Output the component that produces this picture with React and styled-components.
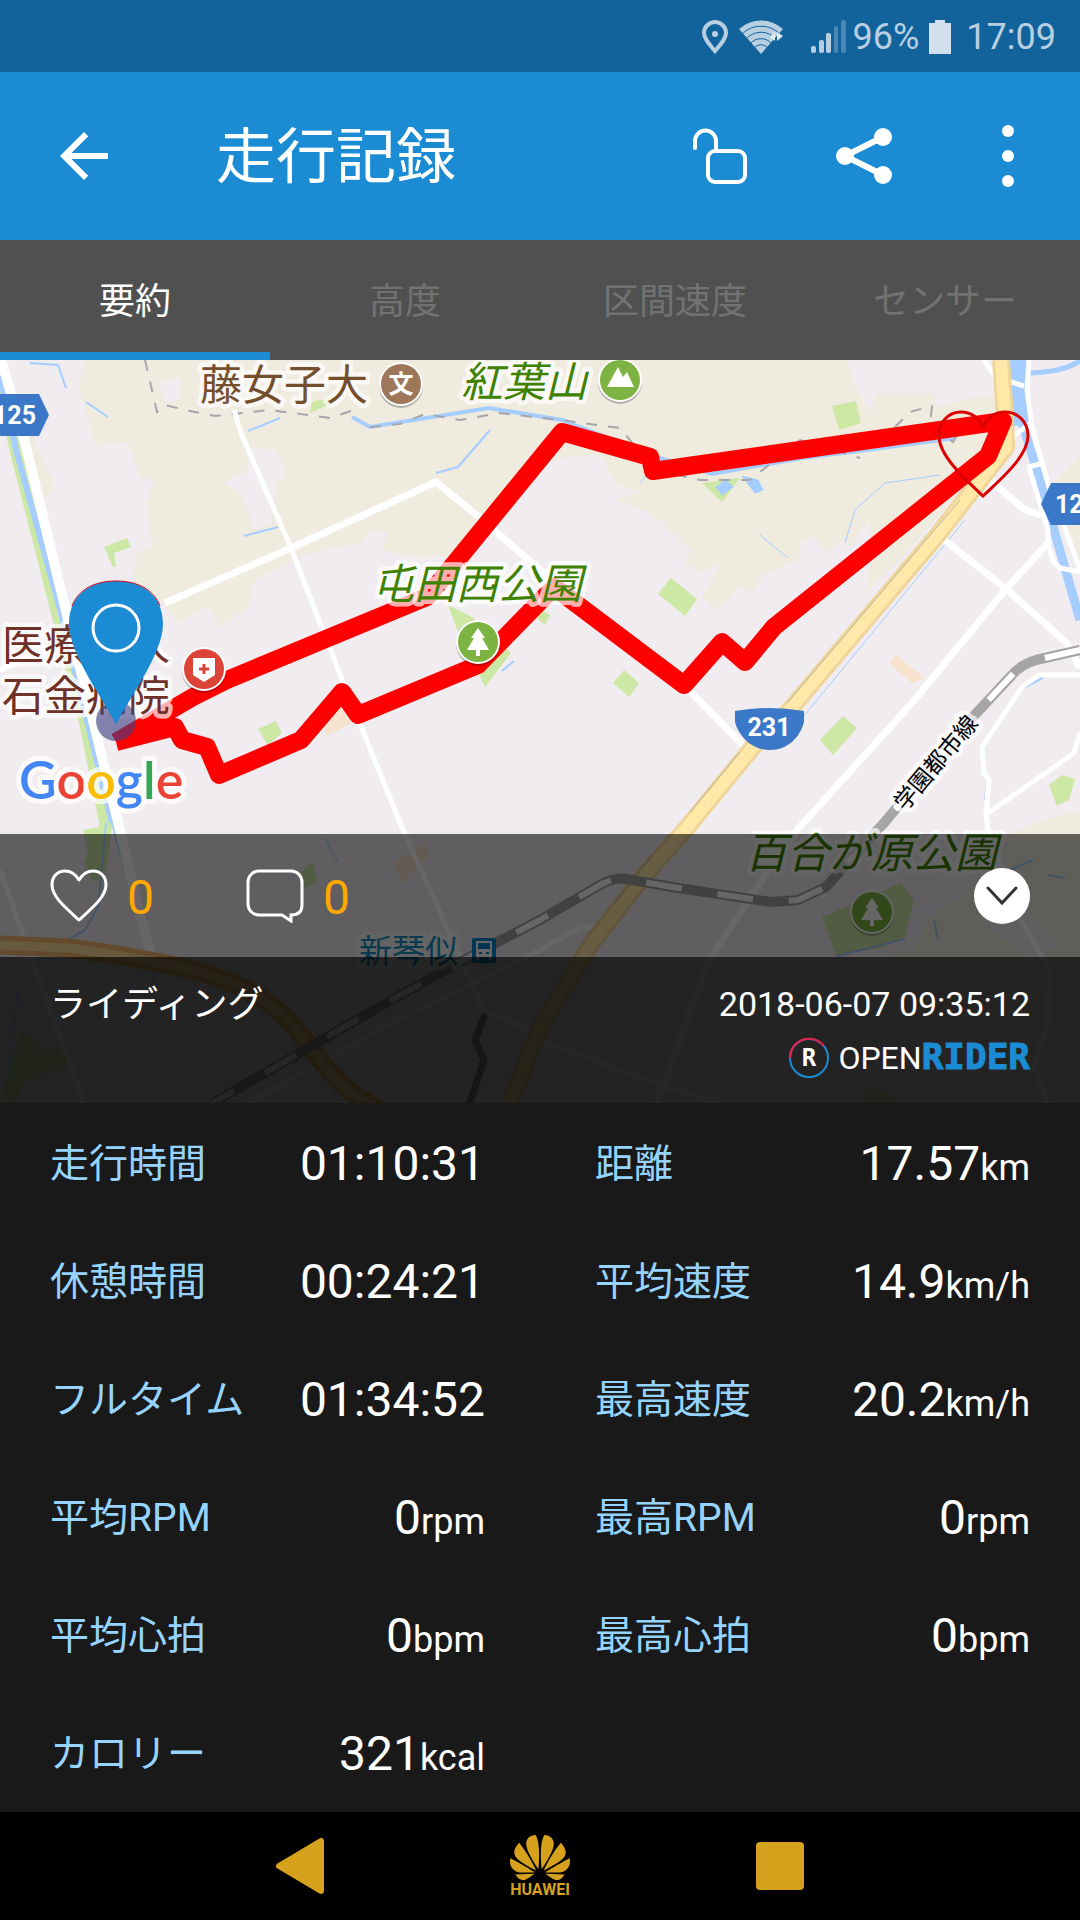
import styled, {createGlobalStyle} from "styled-components";
import {SiHuawei} from "react-icons/si";

const stats = [
    {label: "走行時間", value: "01:10:31"},
    {label: "距離", value: "17.57", unit: "km"},
    {label: "休憩時間", value: "00:24:21"},
    {label: "平均速度", value: "14.9", unit: "km/h"},
    {label: "フルタイム", value: "01:34:52"},
    {label: "最高速度", value: "20.2", unit: "km/h"},
    {label: "平均RPM", value: "0", unit: "rpm"},
    {label: "最高RPM", value: "0", unit: "rpm"},
    {label: "平均心拍", value: "0", unit: "bpm"},
    {label: "最高心拍", value: "0", unit: "bpm"},
    {label: "カロリー", value: "321", unit: "kcal"},
]

const tabs = ["要約", "高度", "区間速度", "センサー"]

export default function App() {
    return <Page>
        <GlobalStyle/>
        <StatusBar/>
        <AppBar/>
        <TabList role="tablist">
            {tabs.map((name, i) => <Tab key={name} role="tab" aria-selected={i === 0} $active={i === 0}>{name}</Tab>)}
        </TabList>
        <MapArea>
            <RideMap/>
            <MapPanels>
                <Reactions/>
                <RideInfo/>
            </MapPanels>
        </MapArea>
        <StatGrid>
            {stats.map(stat => <Stat key={stat.label} {...stat}/>)}
        </StatGrid>
        <NavBar/>
    </Page>
}

const StatusBar = () => {
    return <StatusRow>
        <svg width="28" height="34" viewBox="0 0 28 34" fill="none" stroke="#b8cfe1" strokeWidth="4">
            <path d="M14 31C9 25 3 19 3 13a11 11 0 0 1 22 0c0 6-6 12-11 18z"/>
            <circle cx="14" cy="14" r="3" fill="#b8cfe1" stroke="none"/>
        </svg>
        <WifiIcon/>
        <SignalIcon/>
        <span>96%</span>
        <BatteryIcon width="22" height="34" viewBox="0 0 22 34">
            <path d="M6 0h10v3h6v31H0V3h6z" fill="#d1e0ec"/>
        </BatteryIcon>
        <time>17:09</time>
    </StatusRow>
}

const WifiIcon = () => {
    return <svg width="44" height="34" viewBox="0 0 44 34">
        <path d="M22 34 0 9a33 33 0 0 1 44 0z" fill="#b8cfe1"/>
        <g fill="none" stroke="#12629c" strokeWidth="1">
            <path d="M3 14a27 27 0 0 1 38 0"/>
            <path d="M7 19a20 20 0 0 1 30 0"/>
            <path d="M11 24a14 14 0 0 1 22 0"/>
            <path d="M15 28a9 9 0 0 1 14 0"/>
        </g>
        <path d="m31 17 5-5v9zM38 12v9l6-5z" fill="#e3ecf4"/>
    </svg>
}

const SignalIcon = () => {
    return <Signal width="36" height="34" viewBox="0 0 36 34" fill="#b8cfe1">
        <rect x="0" y="26" width="5" height="7" rx="2"/>
        <rect x="8" y="20" width="5" height="13" rx="2"/>
        <rect x="15" y="13" width="5" height="20" rx="2"/>
        <rect x="23" y="6" width="4" height="27" rx="2" opacity=".35"/>
        <rect x="30" y="0" width="5" height="33" rx="2" opacity=".35"/>
    </Signal>
}

const AppBar = () => {
    return <Header>
        <BackButton aria-label="戻る">
            <svg width="72" height="72" viewBox="0 0 24 24" fill="#fff">
                <path d="M20 11H7.83l5.59-5.59L12 4l-8 8 8 8 1.41-1.41L7.83 13H20v-2z"/>
            </svg>
        </BackButton>
        <Title>走行記録</Title>
        <ActionButton aria-label="ロック">
            <svg width="56" height="56" viewBox="0 0 56 56" fill="none" stroke="#fff" strokeWidth="4">
                <path d="M3 20V13a10 10 0 0 1 21 0v10" strokeLinecap="round"/>
                <rect x="16" y="23" width="37" height="31" rx="7"/>
            </svg>
        </ActionButton>
        <ActionButton aria-label="共有">
            <svg width="56" height="56" viewBox="0 0 56 56" fill="#fff" stroke="#fff">
                <path d="M47 9 9 28l38 19" fill="none" strokeWidth="6"/>
                <g stroke="none">
                    <circle cx="9" cy="28" r="9"/>
                    <circle cx="47" cy="9" r="9"/>
                    <circle cx="47" cy="47" r="9"/>
                </g>
            </svg>
        </ActionButton>
        <ActionButton aria-label="メニュー">
            <svg width="12" height="62" viewBox="0 0 12 62" fill="#fff">
                <circle cx="6" cy="6" r="6"/>
                <circle cx="6" cy="31" r="6"/>
                <circle cx="6" cy="56" r="6"/>
            </svg>
        </ActionButton>
    </Header>
}

const MapBadge = ({x, y, color, children}) => {
    return <g transform={`translate(${x} ${y})`}>
        <circle cy="2" r="22" fill="#000" opacity=".25"/>
        <circle r="22" fill="#fff"/>
        <circle r="20" fill={color}/>
        {children}
    </g>
}

const Tree = () => <path d="M0-14 7-4H4l7 12H2v6h-4V8h-9l7-12h-3z" fill="#fff"/>

const RideMap = () => {
    return <MapSvg viewBox="0 360 1080 743" preserveAspectRatio="xMidYMid slice" role="img" aria-label="走行ルートの地図">
        <rect y="360" width="1080" height="743" fill="#f0ecef"/>
        <Terrain/>
        <Roads/>
        <Route d="M116 742 193 697 227 680 427 597 562 432 650 457 653 471 1003 421 988 456 774 627 745 662 722 642 684 685 554 587 478 665 358 715 342 692 301 740 219 775 207 747 182 740 175 727 116 742"/>
        <MapLabels/>
        <circle cx="116" cy="721" r="20" fill="#3f3f82" opacity=".62"/>
        <path d="M116 725C106 702 69 655 69 624c0-28 20-43 47-43s47 15 47 43c0 31-37 78-47 101z" fill="#1b8bd3"/>
        <path d="M72 606c6-16 22-25 44-25s38 9 44 25" fill="none" stroke="#d0021b"/>
        <circle cx="116" cy="628" r="23" fill="none" stroke="#fff" strokeWidth="3"/>
        <path d="M983 496C965 479 939 456 939 436c0-16 11-24 22-24s18 7 22 15c4-8 11-15 22-15s23 8 23 24c0 20-27 43-45 60z"
              fill="none" stroke="#dc0000" strokeWidth="3"/>
    </MapSvg>
}

const Terrain = () => {
    return <>
        <g fill="#efebdf">
            <path d="M83 360 79 390 96 447 127 442 141 477 155 482 145 503 153 547 136 553 133 590 158 597 179 623 207 607 220 627 248 607 255 580 310 553 362 543 372 530 387 533 382 550 413 557 448 557 482 517 540 463 568 457 600 455 615 483 640 493 616 500 650 513 691 550 685 563 700 572 722 563 702 597 716 610 740 587 753 593 760 577 798 560 802 540 815 537 826 553 843 540 850 547 870 520 868 590 900 560 967 483 1001 427 1001 397 974 397 936 407 936 393 877 393 870 413 853 380 846 360z"/>
            <path d="M30 430 55 488 43 498 28 460z"/>
            <path d="M1050 485 1080 455V560z"/>
            <path d="M1080 810 1043 820 1001 837 1005 867 929 917 912 953 850 957 826 987 884 1007 1000 1103H1080z"/>
        </g>
        <g fill="#f0ecef">
            <path d="M248 447 275 450 286 477 275 483 272 523 255 530 241 493 224 483 248 470z"/>
            <path d="M158 382 180 378 178 400 166 402z"/>
            <path d="M980 920 1010 890 1060 945 1030 960z"/>
        </g>
        <g fill="#cde7a5">
            <path d="M104 547 127 538 131 547 114 553 116 567 113 567zM258 729 276 721 282 733 268 745zM312 402 345 394 334 402 310 413zM448 605 472 617 511 653 485 687 477 670 458 632zM530 603 550 615 545 625 530 612z"/>
            <path d="M832 406 856 401 861 423 839 430zM671 578 697 599 685 616 658 594zM624 670 639 683 629 697 613 683zM843 716 857 728 833 755 820 740zM1049 785 1062 775 1075 779 1069 800 1057 806zM702 483 740 478 722 502z"/>
            <path d="M822 917 901 883 914 900 905 937 881 948 836 955zM83 830 100 827 98 863 93 883 84 863 88 853zM301 873 312 862 318 882 301 890zM21 1030 45 1050 62 1047 67 1063 24 1083 14 1103H0zM861 1103 865 1087 893 1095 900 1103z"/>
        </g>
        <path d="M889 663 896 655 924 678 912 683zM324 728 341 708 351 723 327 736zM394 863 424 843 429 857 401 883z" fill="#f7e2cd"/>
        <g fill="none" stroke="#a5cdff">
            <path d="M0 375 16 450 85 720 106 823 98 880" stroke="#cde7a5" strokeWidth="13"/>
            <path d="M0 375 16 450 61 613 91 737 112 823" strokeWidth="6"/>
            <path d="M106 823 98 907 85 930 62 943M112 823 125 870M137 905 155 985M0 365 7 375M30 363 58 365 66 388M86 402 108 417M248 431 280 418M244 536 278 527M436 473 458 467 490 430M502 671 514 661" strokeWidth="2"/>
            <path d="M352 417 370 427 489 408 562 420 660 458 712 474 802 458 867 450 955 438" strokeWidth="4"/>
            <path d="M640 483 660 460M845 543 855 510 885 483 940 475M760 535 788 558M965 520 780 745M325 838 338 862M17 990 15 1025 8 1075" strokeWidth="1"/>
            <path d="M1018 360 1019 400 1022 425" strokeWidth="17"/>
            <path d="M1021 420 1036 467 1056 537 1080 620" strokeWidth="9"/>
            <path d="M1030 373C1050 372 1065 370 1080 361" strokeWidth="5"/>
            <path d="M837 956 905 939M1010 870 1033 860M1048 875 1065 878M988 775 985 800M1020 690 1044 677M934 920 938 940" strokeWidth="2"/>
            <path d="M716 487 726 480 733 487 722 495zM742 476 758 480 763 490 755 493z" fill="#a5cdff"/>
        </g>
        <path d="M145 360 157 412 165 405 185 410 215 416 270 410 330 418 360 408M370 427 400 424 425 414 460 420 500 413 560 420 620 428 655 470 700 480 750 480 800 440 860 458M895 427 910 412 932 406 930 425 953 442 960 430"
              fill="none" stroke="#a6a6ab" strokeWidth="2" strokeDasharray="11 11"/>
    </>
}

const Roads = () => {
    return <g fill="none" strokeLinejoin="round">
        <g stroke="#fff">
            <path d="M0 355 26 447 64 603 120 830 138 907 151 953" strokeWidth="10"/>
            <path d="M234 410 241 433 291 548 341 677 403 830 454 943 485 1013 510 1020 533 1034" strokeWidth="5"/>
            <path d="M165 603 291 548 436 482 479 517 540 570 684 685 745 747" strokeWidth="7"/>
            <path d="M0 670 60 645M430 487 434 480" strokeWidth="6"/>
            <path d="M938 535 1005 588 1067 643 1080 668M986 477 1025 510 1041 515" strokeWidth="7"/>
            <path d="M1048 543 1005 590 912 703 797 830 760 883 709 960 657 1103" strokeWidth="7"/>
            <path d="M984 360 995 377 1024 386M1029 360 1027 390 1032 427 1050 490 1063 523 1080 570M1032 422 1012 437M1043 463 1029 467 1048 530V545L1054 563 1060 568 1080 572" strokeWidth="5"/>
            <path d="M1080 675H1039L1022 687 982 747 984 773 989 780 986 813 988 830 1019 917 1050 970 1048 1020 1034 1067 1048 1103M1080 733 1074 753 1060 763 988 813" strokeWidth="5"/>
            <path d="M0 870 31 957 84 1103M248 1103 379 1030 540 950 581 927H597M540 1040 660 1085 720 1103" strokeWidth="5"/>
        </g>
        <g strokeWidth="18" stroke="#f0d59a">
            <path d="M1001 360 1005 417 1006 447 936 537 788 712 753 747 685 830 643 877 592 943 540 1027 510 1103"/>
            <path d="M1001 360 1005 417 1006 447 936 537 788 712 753 747 685 830 643 877 592 943 540 1027 510 1103" strokeWidth="12" stroke="#ffe8a8"/>
        </g>
        <path d="M960 500 788 702M740 752 690 812M650 858 615 903" stroke="#b5b5a0" strokeWidth="1"/>
        <path d="M0 945 69 948C120 955 165 963 200 972 270 992 290 1020 310 1047 335 1080 350 1095 380 1110" stroke="#f7b96f" strokeWidth="19"/>
        <path d="M0 945 69 948C120 955 165 963 200 972 270 992 290 1020 310 1047 335 1080 350 1095 380 1110" stroke="#ffdf9b" strokeWidth="9"/>
        <path d="M484 1017 475 1040 484 1060 470 1103" stroke="#8a8a8a" strokeWidth="7" strokeLinecap="round"/>
        <path d="M1080 650 1036 660Q1020 665 1012 675L970 720 884 823 850 860 826 887 798 900 771 902 678 888 626 879Q615 877 600 885L540 920 482 950 379 1007 213 1103" stroke="#a5a4a6" strokeWidth="10"/>
        <path d="M1080 650 1036 660Q1020 665 1012 675L970 720 884 823 850 860 826 887 798 900 771 902 678 888 626 879Q615 877 600 885L540 920 482 950 379 1007 213 1103" stroke="#fff" strokeWidth="6" strokeDasharray="36 36"/>
    </g>
}

const MapLabels = () => {
    return <>
        <Label x="200" y="400" fill="#744f2e">藤女子大</Label>
        <MapBadge x={401} y={384} color="#9e7659">
            <BadgeText y="9" textAnchor="middle">文</BadgeText>
        </MapBadge>
        <Label x="461" y="397" fill="#3f8200" $italic>紅葉山</Label>
        <MapBadge x={620} y={380} color="#7cb342">
            <path d="M-13 7-2-13 3-3 7-8 14 7zM1-3 2 3" fill="#fff"/>
        </MapBadge>
        <Label x="372" y="599" fill="#3f8200" $italic>屯田西公園</Label>
        <MapBadge x={478} y={642} color="#7cb342"><Tree/></MapBadge>
        <Label x="2" y="660" fill="#6f3028">医療法人</Label>
        <Label x="2" y="711" fill="#6f3028">石金病院</Label>
        <MapBadge x={204} y={669} color="#db4437">
            <path d="M-11-11H11V6L0 13-11 6z" fill="#fff"/>
            <path d="M-5 0H5M0-5V5" stroke="#db4437" strokeWidth="3"/>
        </MapBadge>
        <Label x="745" y="868" fill="#3f8200" $italic>百合が原公園</Label>
        <MapBadge x={872} y={912} color="#7cb342"><Tree/></MapBadge>
        <Label x="359" y="963" fill="#168fc6" $size={33}>新琴似</Label>
        <rect x="472" y="938" width="24" height="25" rx="2" fill="#0288d1"/>
        <path d="M477 942h14v14h-14z" fill="none" stroke="#fff" strokeWidth="2"/>
        <path d="M477 950h14v6h-14zM479 956l-2 4M489 956l2 4" fill="#fff" stroke="#fff" strokeWidth="2"/>
        <path d="M479 952h3v2h-3zM486 952h3v2h-3z" fill="#0288d1"/>
        <Label textAnchor="middle" transform="translate(942 768) rotate(-50)" fill="#000" $size={23}>学園都市線</Label>
        <path d="M0 394H39L49 415 39 436H0z" fill="#3c78c8"/>
        <ShieldText x="36" y="424" textAnchor="end">125</ShieldText>
        <path d="M1080 483H1051L1041 504 1051 525H1080z" fill="#3c78c8"/>
        <ShieldText x="1055" y="513">12</ShieldText>
        <path d="M735 711Q769 705 804 711V722C800 737 788 750 770 750S739 737 735 722z" fill="#3c78c8"/>
        <ShieldText x="769" y="736" textAnchor="middle">231</ShieldText>
        <Google x="19" y="799">
            <tspan fill="#4285f4">G</tspan>
            <tspan fill="#ea4335">o</tspan>
            <tspan fill="#fbbc05">o</tspan>
            <tspan fill="#4285f4">g</tspan>
            <tspan fill="#34a853">l</tspan>
            <tspan fill="#ea4335">e</tspan>
        </Google>
    </>
}

const Reactions = () => {
    return <ReactionBar>
        <ReactionButton aria-label="いいね">
            <svg width="58" height="54" viewBox="0 0 58 54" fill="none" stroke="#fff" strokeWidth="3" strokeLinejoin="round">
                <path d="M29 51C17 40 2 28 2 16 2 7 8 2 15 2s11 4 14 9C32 6 36 2 43 2s13 5 13 14c0 12-15 24-27 35z"/>
            </svg>
            <Count>0</Count>
        </ReactionButton>
        <ReactionButton aria-label="コメント">
            <svg width="58" height="54" viewBox="0 0 58 54" fill="none" stroke="#fff" strokeWidth="3">
                <path d="M13 2h32a11 11 0 0 1 11 11v23c0 7-4 10-11 10v6l-9-6H13A11 11 0 0 1 2 35V13A11 11 0 0 1 13 2z"/>
            </svg>
            <Count>0</Count>
        </ReactionButton>
        <ExpandButton aria-label="閉じる">
            <svg width="32" height="20" viewBox="0 0 32 20" fill="none" stroke="#333" strokeWidth="3" strokeLinecap="round">
                <path d="m2 2 14 15L30 2"/>
            </svg>
        </ExpandButton>
    </ReactionBar>
}

const RideInfo = () => {
    return <InfoBar>
        <RideType>ライディング</RideType>
        <InfoRight>
            <RideDate dateTime="2018-06-07T09:35:12">2018-06-07 09:35:12</RideDate>
            <Brand>
                <svg width="42" height="42" viewBox="0 0 42 42">
                    <circle cx="21" cy="21" r="19" fill="none" stroke="#1b8bd3" strokeWidth="2"/>
                    <path d="M2 21A19 19 0 0 1 36 9" fill="none" stroke="#e8204e" strokeWidth="2"/>
                    <RingLetter x="21" y="29" textAnchor="middle">R</RingLetter>
                </svg>
                <span>OPEN<BrandStrong>RIDER</BrandStrong></span>
            </Brand>
        </InfoRight>
    </InfoBar>
}

const Stat = ({label, value, unit}) => {
    return <StatCell>
        <dt>{label}</dt>
        <dd>{value}{unit && <Unit>{unit}</Unit>}</dd>
    </StatCell>
}

const NavBar = () => {
    return <Nav>
        <NavButton aria-label="戻る">
            <svg width="50" height="60" viewBox="0 0 50 60" fill="#d6a11c" stroke="#d6a11c" strokeWidth="6" strokeLinejoin="round">
                <path d="M4 30 46 5v50z"/>
            </svg>
        </NavButton>
        <NavButton aria-label="ホーム">
            <HomeLogo viewBox="0 3 24 18"/>
            HUAWEI
        </NavButton>
        <NavButton aria-label="履歴">
            <svg width="48" height="48" viewBox="0 0 48 48">
                <rect width="48" height="48" rx="4" fill="#d6a11c"/>
            </svg>
        </NavButton>
    </Nav>
}

const GlobalStyle = createGlobalStyle`
  * {
    box-sizing: border-box;
  }

  body {
    margin: 0;
    background: #191919;
    color: #fff;
    font-family: Roboto, "Noto Sans CJK JP", sans-serif;
  }

  svg {
    display: block;
  }
`

const Page = styled.div`
  display: flex;
  flex-direction: column;
  min-height: 100vh;
`

const PlainButton = styled.button`
  display: flex;
  align-items: center;
  justify-content: center;
  padding: 0;
  border: 0;
  background: none;
  color: inherit;
  font: inherit;
`

const StatusRow = styled.div`
  display: flex;
  align-items: center;
  justify-content: flex-end;
  gap: 10px;
  height: 72px;
  padding: 2px 24px 0 0;
  background: #12629c;
  color: #b8cfe1;
  font-size: 36px;
`

const Signal = styled.svg`
  margin-left: 18px;
  margin-right: -4px;
`

const BatteryIcon = styled.svg`
  margin-right: 5px;
`

const Header = styled.header`
  display: flex;
  align-items: center;
  height: 168px;
  padding-left: 48px;
  background: #1b8bd3;
`

const BackButton = styled(PlainButton)`
  width: 72px;
  height: 72px;
`

const Title = styled.h1`
  flex: 1;
  margin: 0 0 0 96px;
  padding-top: 4px;
  font-size: 60px;
  font-weight: 400;
  line-height: 72px;
`

const ActionButton = styled(PlainButton)`
  width: 144px;
  height: 144px;
`

const TabList = styled.div`
  display: grid;
  grid-template-columns: repeat(4, 1fr);
  height: 120px;
  background: #505050;
`

const Tab = styled(PlainButton)`
  padding-top: 4px;
  border-bottom: 8px solid ${({$active}) => $active ? "#1b8bd3" : "transparent"};
  color: ${({$active}) => $active ? "#fff" : "#727272"};
  font-size: 36px;
`

const MapArea = styled.section`
  display: grid;
  aspect-ratio: 1080 / 743;
  overflow: hidden;

  > * {
    grid-area: 1 / 1;
  }
`

const MapSvg = styled.svg`
  width: 100%;
  height: 100%;
`

const MapPanels = styled.div`
  z-index: 1;
  align-self: end;
`

const Route = styled.path`
  fill: none;
  stroke: #f00;
  stroke-width: 18px;
  stroke-linejoin: round;
`

const Label = styled.text`
  font-size: ${({$size}) => $size || 42}px;
  font-style: ${({$italic}) => $italic ? "italic" : "normal"};
  font-family: "Noto Sans CJK JP", sans-serif;
  paint-order: stroke;
  stroke: rgba(255, 255, 255, 0.7);
  stroke-width: 9px;
  stroke-linejoin: round;
`

const BadgeText = styled.text`
  fill: #fff;
  font-size: 25px;
  font-weight: 700;
`

const ShieldText = styled.text`
  fill: #fff;
  font-size: 25px;
  font-weight: 700;
`

const Google = styled.text`
  font-family: Lato, sans-serif;
  font-size: 52px;
  font-weight: 600;
  paint-order: stroke;
  stroke: rgba(255, 255, 255, 0.7);
  stroke-width: 10px;
  stroke-linejoin: round;
`

const ReactionBar = styled.div`
  display: flex;
  align-items: center;
  gap: 92px;
  height: 123px;
  padding: 0 50px;
  background: rgba(0, 0, 0, 0.6);
`

const ReactionButton = styled(PlainButton)`
  gap: 19px;
`

const Count = styled.span`
  padding-top: 4px;
  color: #ffa800;
  font-size: 48px;
  line-height: 56px;
`

const ExpandButton = styled(PlainButton)`
  width: 56px;
  height: 56px;
  margin-left: auto;
  border-radius: 50%;
  background: #fff;
`

const InfoBar = styled.div`
  display: flex;
  justify-content: space-between;
  height: 146px;
  padding: 24px 50px;
  background: rgba(0, 0, 0, 0.85);
`

const RideType = styled.div`
  font-size: 36px;
  line-height: 48px;
`

const InfoRight = styled.div`
  display: flex;
  flex-direction: column;
  align-items: flex-end;
  gap: 10px;
`

const RideDate = styled.time`
  font-size: 34px;
  line-height: 46px;
`

const Brand = styled.div`
  display: flex;
  align-items: center;
  gap: 8px;
  font-size: 32px;
  line-height: 42px;
`

const BrandStrong = styled.strong`
  color: #1b8bd3;
  font-family: "DejaVu Sans Mono", monospace;
  font-size: 36px;
  line-height: 36px;
  -webkit-text-stroke: 1px #1b8bd3;
`

const RingLetter = styled.text`
  fill: #fff;
  font-family: "DejaVu Sans Mono", monospace;
  font-size: 24px;
  font-weight: 700;
`

const StatGrid = styled.dl`
  flex: 1;
  display: grid;
  grid-template-columns: 1fr 1fr;
  grid-auto-rows: minmax(118px, 1fr);
  column-gap: 110px;
  margin: 0;
  padding: 0 50px;
`

const StatCell = styled.div`
  display: flex;
  align-items: center;
  justify-content: space-between;
  padding-top: 3px;

  dt {
    color: #96d4ff;
    font-size: 39px;
    line-height: 56px;
  }

  dd {
    margin: 0;
    font-size: 48px;
    line-height: 56px;
  }
`

const Unit = styled.span`
  font-size: 36px;
  line-height: 36px;
`

const Nav = styled.nav`
  display: flex;
  justify-content: center;
  height: 108px;
  background: #000;
`

const NavButton = styled(PlainButton)`
  flex-direction: column;
  gap: 2px;
  width: 240px;
  color: #d6a11c;
  font-size: 16px;
  font-weight: 700;
  line-height: 16px;
`

const HomeLogo = styled(SiHuawei)`
  width: 60px;
  height: 45px;
`
